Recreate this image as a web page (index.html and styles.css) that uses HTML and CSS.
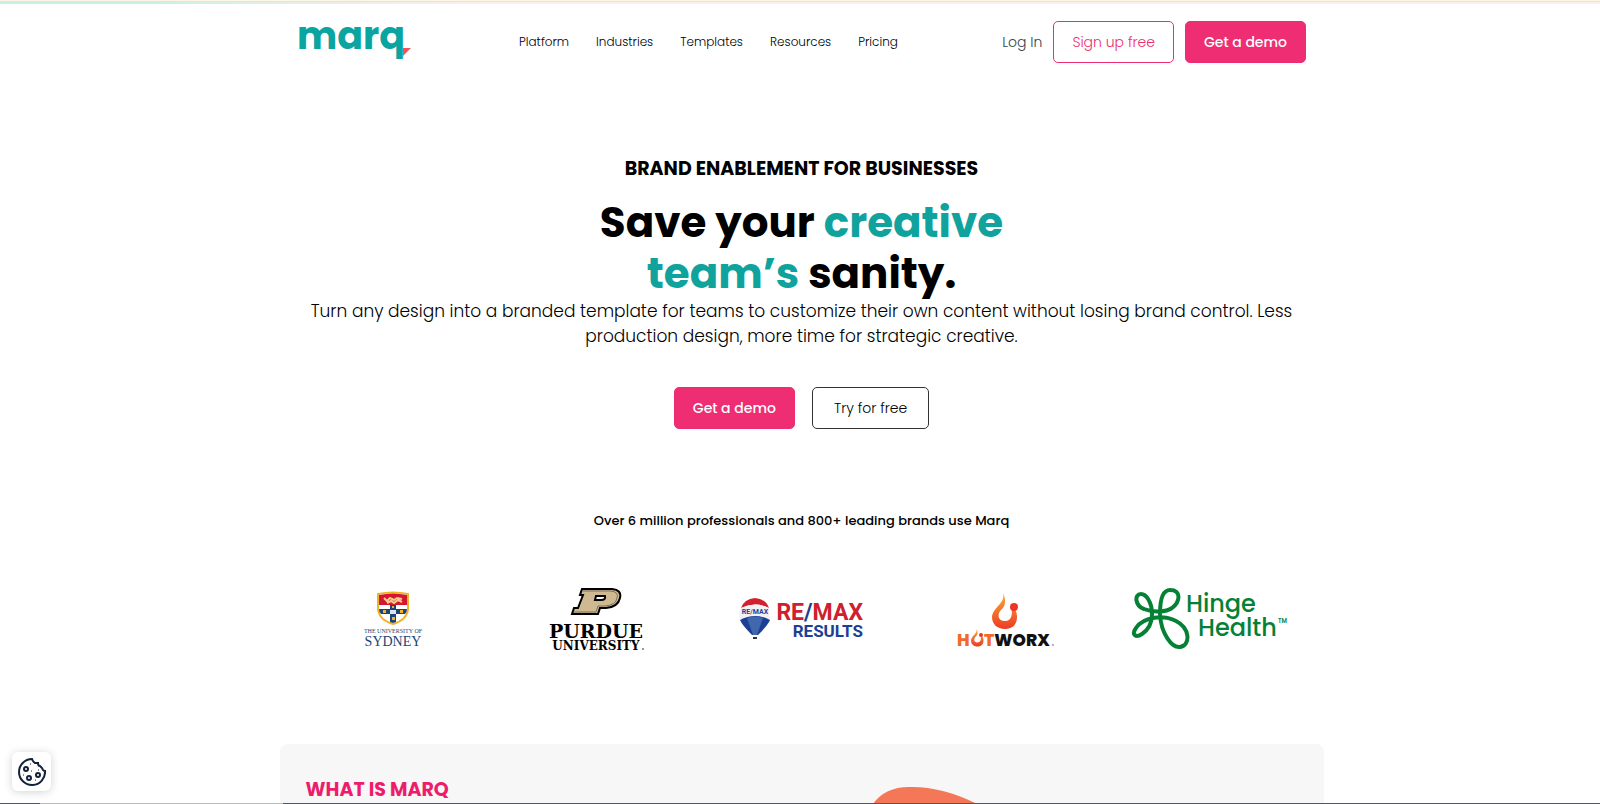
FILE: index.html
```html
<!DOCTYPE html>
<html lang="en">
<head>
   <meta charset="UTF-8">
   <title>Marq - Brand enablement for businesses</title>
   <meta name="viewport" content="width=device-width, initial-scale=1.0">
   <link rel="stylesheet" href="styles.css">
</head>
<body>
   <div class="top-strip"></div>
   <header class="container header">
      <a href="#" class="logo" aria-label="marq">
         <svg width="116" height="60" viewBox="0 0 116 60">
            <text class="logo-text" x="0" y="37">marq</text>
            <path fill="#f2545b" d="M106 36h8l-8 8z"/>
         </svg>
      </a>
      <nav class="nav">
         <a href="#">Platform</a>
         <a href="#">Industries</a>
         <a href="#">Templates</a>
         <a href="#">Resources</a>
         <a href="#">Pricing</a>
      </nav>
      <div class="actions">
         <a href="#" class="login">Log In</a>
         <button class="btn btn-outline">Sign up free</button>
         <button class="btn btn-pink">Get a demo</button>
      </div>
   </header>
   <main>
      <section class="container hero">
         <h2 class="eyebrow">BRAND ENABLEMENT FOR BUSINESSES</h2>
         <h1>Save your <span>creative<br>team’s</span> sanity.</h1>
         <p class="lead">Turn any design into a branded template for teams to customize their own content without losing brand control. Less production design, more time for strategic creative.</p>
         <div class="hero-buttons">
            <button class="btn btn-pink">Get a demo</button>
            <button class="btn btn-dark">Try for free</button>
         </div>
      </section>
      <section class="container brands">
         <p>Over 6 million professionals and 800+ leading brands use Marq</p>
         <div class="brand-list">
            <!-- University of Sydney -->
            <svg width="160" height="70" viewBox="0 0 160 70">
               <path fill="#fff" stroke="#f0b323" stroke-width="2" d="M64 10Q79 7 94 10V25Q93 36 79 40Q65 36 64 25z"/>
               <path fill="#d3172e" d="M65 11Q79 8 93 11V21H65z"/>
               <path fill="none" stroke="#f8c98c" stroke-width="2" d="M70 14l3 3 3-3 4 2 3-2 5 1M73 19l4-2 3 2 4-3 4 2"/>
               <path fill="#1d4477" d="M65 25h11v-4h6v4h11q0 3-2 5H82v8l-3 1-3-1v-8H67q-2-2-2-5z"/>
               <path fill="#f0b323" d="M69 26h3v3h-3zM86 26h3v3h-3zM78 22h2v2h-2zM78 33h3v3h-3z"/>
               <path fill="#dce5ee" d="M76 26h6v4h-6z"/>
               <text class="sydney-small" x="79" y="49">THE UNIVERSITY OF</text>
               <text class="sydney" x="79" y="62">SYDNEY</text>
            </svg>
            <!-- Purdue -->
            <svg width="160" height="70" viewBox="0 0 160 70">
               <path fill="#cfb991" stroke="#000" stroke-width="2" d="M64 5H94Q104 6 102 14Q100 23 88 24H82L80 30H54L56 24H60L65 11H62z"/>
               <path fill="none" stroke="#77705f" d="M65 7H93Q101 8 99 14Q98 21 87 22H80L78 28H56"/>
               <path fill="#fff" stroke="#000" stroke-width="2" d="M78 12h9q1 4-4 4h-6z"/>
               <text class="purdue" x="78" y="54">PURDUE</text>
               <text class="purdue-small" x="78" y="66">UNIVERSITY</text>
               <circle cx="125" cy="65" r="1" fill="#777"/>
            </svg>
            <!-- RE/MAX Results -->
            <svg width="160" height="70" viewBox="0 0 160 70">
               <path fill="#d2202e" d="M19 24Q22 15 33 14Q44 15 47 24Q33 17 19 24z"/>
               <path fill="#f1f2f6" d="M19 24Q33 17 47 24L48 36Q33 29 18 36L17 30z"/>
               <path fill="#1b3f94" d="M18 36Q33 28 48 36Q46 41 36 51H30Q20 41 18 36z"/>
               <path fill="#4167ac" d="M25 34Q33 31 41 34L35 51H31z"/>
               <path fill="#333" d="M31 53h4v2h-4z"/>
               <text class="balloon" x="33" y="30"><tspan fill="#1b3f94">RE</tspan>/<tspan fill="#1b3f94">MAX</tspan></text>
               <text class="remax" x="141" y="36">RE<tspan fill="#1b3f94">/</tspan>MAX</text>
               <text class="results" x="141" y="53">RESULTS</text>
            </svg>
            <!-- Hotworx -->
            <svg width="160" height="70" viewBox="0 0 160 70">
               <defs>
                  <linearGradient id="fire" x1="0" y1="0" x2="0" y2="1">
                     <stop offset="0" stop-color="#fbac35"/>
                     <stop offset="1" stop-color="#ec3b24"/>
                  </linearGradient>
               </defs>
               <path id="flame" fill="url(#fire)" d="M77 9C80 19 67 23 66 33C66 40 71 45 79 45C87 45 91 40 91 33C91 28 89 24 85 23C87 29 86 37 79 37C71 37 71 29 76 25C80 21 80 15 77 9z"/>
               <circle cx="88" cy="23" r="4" fill="#ee3524"/>
               <text class="hot" x="31" y="62">H</text>
               <use href="#flame" transform="translate(12 40) scale(.5)"/>
               <circle cx="55" cy="51" r="2" fill="#ee3524"/>
               <text class="hot" x="58" y="62">T<tspan fill="#111">WORX</tspan></text>
               <circle cx="127" cy="61" r="1" fill="#999"/>
            </svg>
            <!-- Hinge Health -->
            <svg width="160" height="70" viewBox="0 0 160 70">
               <path fill="none" stroke="#058136" stroke-width="4" d="M22 30C22 18 16 10 11 10C4 10 5 22 14 25C24 29 36 28 42 24C50 18 52 6 40 6C32 6 30 18 30 30C31 50 42 64 50 63C61 61 60 44 46 37C34 31 14 32 6 44C1 51 6 54 12 50C18 46 22 40 22 30z"/>
               <text class="hinge" x="56" y="28">Hinge</text>
               <text class="hinge" x="68" y="52">Health</text>
               <text class="tm" x="148" y="39">TM</text>
            </svg>
         </div>
      </section>
      <section class="container about">
         <h2>WHAT IS MARQ</h2>
         <svg class="blob" width="300" height="200" viewBox="0 0 300 200">
            <path fill="#f47857" d="M0 20Q12 0 38 0Q73 -1 112 20Q190 60 240 70Q290 90 280 140Q260 190 150 190Q-40 160 0 20z"/>
         </svg>
      </section>
   </main>
   <button class="cookie" aria-label="Cookie settings">
      <svg width="28" height="28" viewBox="0 0 28 28" fill="none" stroke="#14213a" stroke-width="2">
         <path d="M14 1A13 13 0 1 0 27 13Q25 13 24 10L22 8Q20 8 20 5H17Q15 4 14 1z"/>
         <circle cx="8" cy="11" r="2"/>
         <circle cx="11" cy="20" r="2"/>
         <circle cx="20" cy="17" r="2"/>
         <path stroke-width="1" d="M12 6h1M13 13h1M5 17h1M17 22h1M20 12h1"/>
      </svg>
   </button>
   <div class="bottom-line"></div>
</body>
</html>
```

FILE: styles.css
```css
* {
   box-sizing: border-box;
}
body {
   margin: 0;
   height: 100vh;
   overflow: hidden;
   background-color: #fff;
   color: #000;
   font-family: Poppins, Inter, sans-serif;
}
main {
   padding-left: 3px;
}
h1, h2, p {
   margin: 0;
}
a {
   color: inherit;
   text-decoration: none;
}
svg {
   display: block;
}
.container {
   width: 100%;
   max-width: 1044px;
   margin: 0 auto;
}
.top-strip {
   height: 4px;
   border-top: 1px solid #fff6e1;
   background: linear-gradient(to right, #c8edea 8%, #e6eef0 20%, #fdeff1 32%);
   box-shadow: inset 0 1px #efe2d0;
}
.header {
   display: flex;
   align-items: center;
   height: 76px;
   padding: 0 16px 0 19px;
}
.logo-text {
   font-size: 38px;
   font-weight: 700;
   fill: #0aa5a0;
}
.nav {
   display: flex;
   gap: 27px;
   margin-left: 106px;
   font-size: 12px;
}
.actions {
   display: flex;
   align-items: center;
   gap: 11px;
   margin-left: auto;
   font-size: 14px;
}
.nav, .login, .btn-outline, .btn-dark, .lead {
   font-weight: 300;
}
.login {
   color: #33414e;
}
.btn {
   height: 42px;
   padding: 0 18px;
   border: 1px solid #ee2d72;
   border-radius: 5px;
   background-color: #fff;
   font-family: inherit;
   font-size: 14px;
   cursor: pointer;
}
.btn-outline {
   color: #ee2d72;
}
.btn-pink {
   background-color: #ee2d72;
   color: #fff;
   font-weight: 500;
}
.btn-dark {
   border-color: #333;
   padding: 0 21px;
}

/* hero */
.hero {
   padding-top: 74px;
   text-align: center;
}
.eyebrow {
   font-size: 19px;
   line-height: 30px;
   font-weight: 700;
}
h1 {
   margin-top: 13px;
   font-size: 42px;
   line-height: 51px;
   font-weight: 700;
}
h1 span {
   color: #10a39d;
}
.lead {
   padding: 0 20px;
   font-size: 17px;
   line-height: 25px;
}
.hero-buttons {
   display: flex;
   justify-content: center;
   gap: 17px;
   margin-top: 38px;
}

/* customer logos */
.brands {
   padding: 82px 12px 0;
   text-align: center;
}
.brands p {
   font-size: 13px;
   line-height: 20px;
   font-weight: 500;
}
.brand-list {
   display: grid;
   grid-template-columns: repeat(5, 1fr);
   justify-items: center;
   margin-top: 53px;
}
.sydney-small, .sydney {
   font-family: "Liberation Serif", serif;
   font-size: 6px;
   fill: #1d4477;
   text-anchor: middle;
}
.sydney {
   font-size: 14px;
}
.purdue, .purdue-small {
   font-family: "DejaVu Serif", serif;
   font-size: 19px;
   font-weight: 700;
   text-anchor: middle;
}
.purdue-small {
   font-size: 12px;
}
.remax, .results {
   font-family: Roboto, sans-serif;
   font-size: 23px;
   font-weight: 700;
   fill: #cf202e;
   text-anchor: end;
}
.results {
   font-size: 17px;
   fill: #1b3f94;
}
.balloon {
   font-family: Roboto, sans-serif;
   font-size: 7px;
   font-weight: 700;
   fill: #d2202e;
   text-anchor: middle;
}
.hot {
   font-size: 17px;
   font-weight: 800;
   fill: #f26a2b;
}
.hinge {
   font-size: 24px;
   font-weight: 500;
   fill: #058136;
}
.tm {
   font-size: 6px;
   font-weight: 600;
   fill: #058136;
}

/* what is marq */
.about {
   display: grid;
   grid-template-columns: 565px 1fr;
   margin-top: 90px;
   padding: 31px 26px;
   border-radius: 8px;
   background-color: #f7f7f7;
}
.about h2 {
   font-size: 19px;
   line-height: 30px;
   font-weight: 700;
   color: #ee1d6b;
}
.blob {
   margin-top: 12px;
   overflow: visible;
}

.cookie {
   position: fixed;
   left: 12px;
   bottom: 13px;
   display: grid;
   place-items: center;
   width: 39px;
   height: 39px;
   padding: 0;
   border: 0;
   border-radius: 6px;
   background-color: #fff;
   box-shadow: 0 1px 8px rgba(20, 33, 58, 0.2);
}
.bottom-line {
   position: fixed;
   left: 0;
   right: 0;
   bottom: 0;
   height: 1px;
   background: linear-gradient(to right, #4f5862 40px, #bbb 40px, #bbb 283px, #4f5862 283px);
}
```
